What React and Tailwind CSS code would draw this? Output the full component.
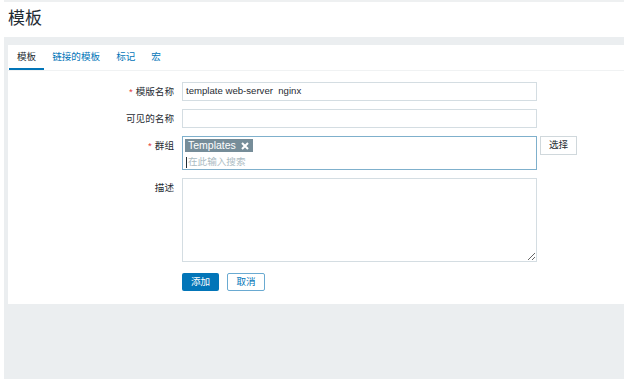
import React from "react";

const FONT = { fontFamily: '"Liberation Sans", "Noto Sans CJK SC", Arial, sans-serif' };

const tabs = ["模板", "链接的模板", "标记", "宏"];

const Label = ({ required, children }) => (
  <div className="w-[174px] shrink-0 pr-2 text-right leading-[19px] text-[#1f2c33]">
    {required && <span className="mr-[3px] text-[#e33734]">*</span>}
    {children}
  </div>
);

const App = () => {
  return (
    <div className="min-h-screen bg-white pl-1 pr-2" style={FONT}>
      <div className="flex min-h-[379px] flex-col">
        <header className="h-[37px] border-t-2 border-[#eef0f1] pl-1 pt-[6px]">
          <h1 className="text-[17px] leading-[22px] text-[#1f2c33]">模板</h1>
        </header>

        <main className="flex-1 bg-[#ebeef0] pl-1 pt-2">
          <div className="bg-white pb-[13px] text-[9.6px]">
            {/* tabs */}
            <div className="flex h-[26px] border-b border-[#f0f2f3] pl-px">
              {tabs.map((t, i) => (
                <div
                  key={t}
                  className={
                    i === 0
                      ? "flex h-[25px] items-center border-b-2 border-[#0275b8] px-2 pt-[2px] text-[#1f2c33]"
                      : "flex h-[25px] items-center px-2 text-[#0275b8]"
                  }
                >
                  {t}
                </div>
              ))}
            </div>

            <div className="flex flex-col pt-[11px]">
              {/* name */}
              <div className="flex">
                <Label required>模版名称</Label>
                <div className="flex h-[19px] w-[355px] items-center border border-[#d4dde2] px-[3px] text-[#1f2c33]">
                  template web-server&nbsp; nginx
                </div>
              </div>

              {/* visible name */}
              <div className="mt-2 flex">
                <Label>可见的名称</Label>
                <div className="h-[19px] w-[355px] border border-[#d4dde2]" />
              </div>

              {/* groups */}
              <div className="mt-2 flex">
                <Label required>群组</Label>
                <div className="h-[34px] w-[355px] border border-[#7fb0cc] pl-[2px] pt-[2px]">
                  <span className="inline-flex h-[13px] items-center gap-[5px] bg-[#768d99] pl-[3px] pr-[4px] text-[10.5px] leading-[13px] text-white">
                    Templates
                    <svg width="8" height="8" viewBox="0 0 8 8">
                      <path d="M1 1L7 7M7 1L1 7" stroke="#fff" strokeWidth="2" />
                    </svg>
                  </span>
                  <div className="mt-[1px] flex h-[16px] items-center pl-[1px] text-[#acbbc2]">
                    <span className="mr-px h-[11px] w-px bg-[#1f2c33]" />
                    在此输入搜索
                  </div>
                </div>
                <button className="ml-[3px] h-[19px] w-[37px] border border-[#d0d8dc] bg-white text-[#1f2c33]">
                  选择
                </button>
              </div>

              {/* description */}
              <div className="mt-[8px] flex">
                <Label>描述</Label>
                <textarea className="h-[84px] w-[355px] border border-[#d4dde2] outline-none" />
              </div>

              {/* actions */}
              <div className="mt-[11px] flex gap-2 pl-[174px]">
                <button className="h-[18px] w-[37px] rounded-[2px] bg-[#0275b8] text-white">
                  添加
                </button>
                <button className="h-[18px] w-[38px] rounded-[2px] border border-[#6aaad1] bg-white text-[#0275b8]">
                  取消
                </button>
              </div>
            </div>
          </div>
        </main>
      </div>
    </div>
  );
};

export default App;
